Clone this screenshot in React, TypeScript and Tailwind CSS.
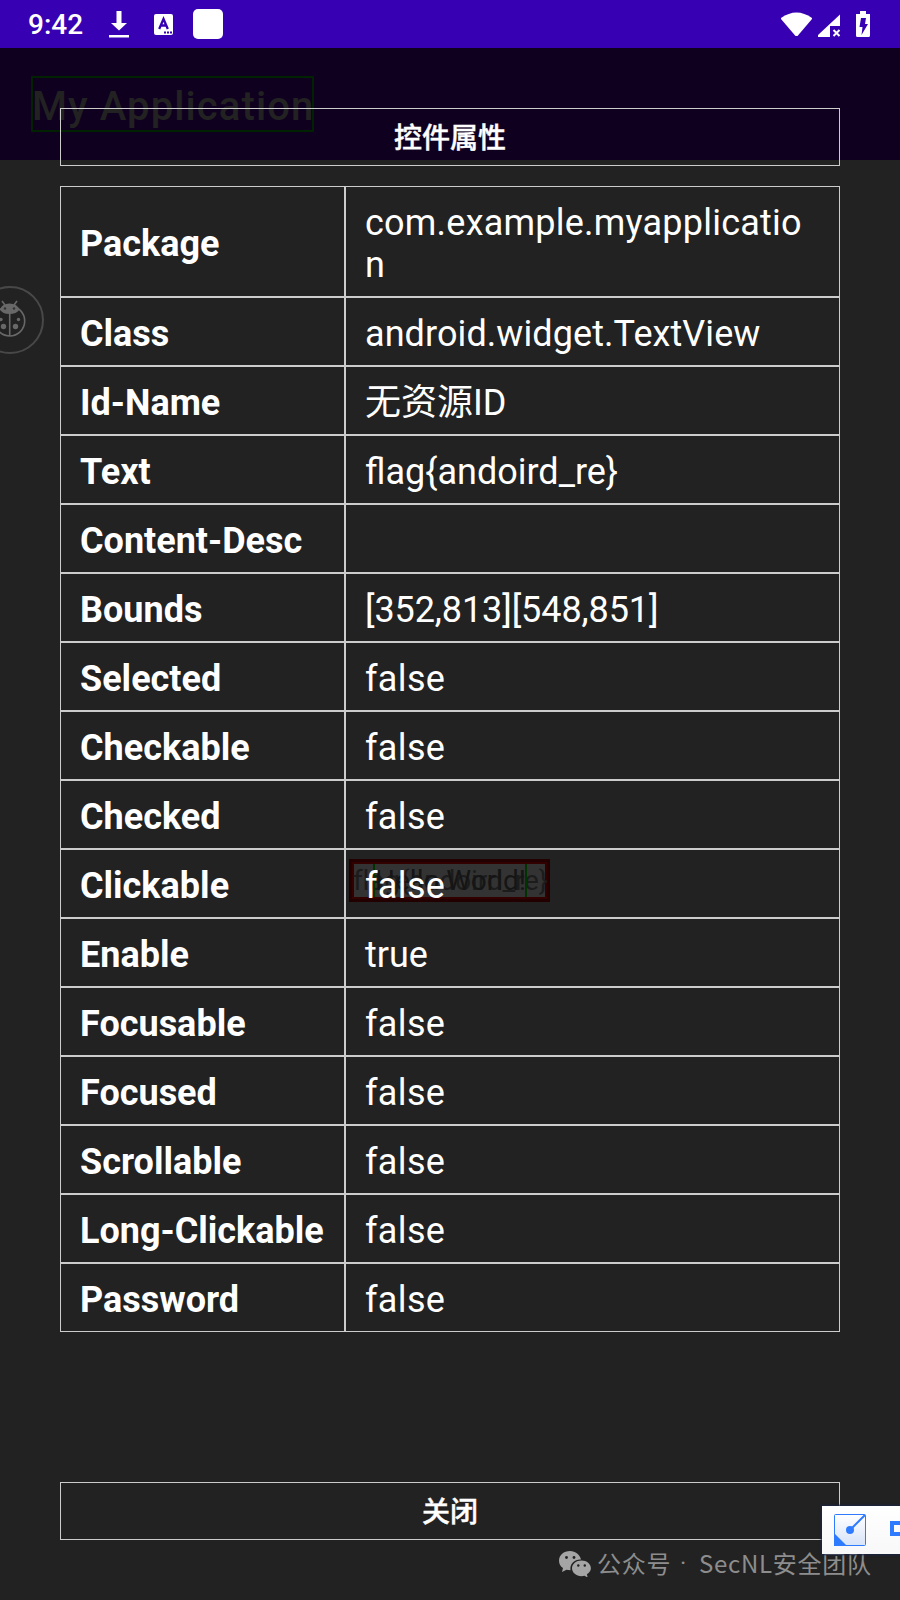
import React from "react";

const rows: [string, string, string][] = [
  ["Package", "com.example.myapplication", "tracking-[0.220px]"],
  ["Class", "android.widget.TextView", "tracking-[0.080px]"],
  ["Id-Name", "无资源ID", "tracking-normal"],
  ["Text", "flag{andoird_re}", "tracking-normal"],
  ["Content-Desc", "", "tracking-normal"],
  ["Bounds", "[352,813][548,851]", "tracking-[-0.100px]"],
  ["Selected", "false", "tracking-[0.350px]"],
  ["Checkable", "false", "tracking-[0.350px]"],
  ["Checked", "false", "tracking-[0.350px]"],
  ["Clickable", "false", "tracking-[0.350px]"],
  ["Enable", "true", "tracking-normal"],
  ["Focusable", "false", "tracking-[0.350px]"],
  ["Focused", "false", "tracking-[0.350px]"],
  ["Scrollable", "false", "tracking-[0.350px]"],
  ["Long-Clickable", "false", "tracking-[0.350px]"],
  ["Password", "false", "tracking-[0.350px]"],
];

function StatusBar() {
  return (
    <header className="flex h-12 items-center bg-[#3700b3] pl-7 text-white">
      <span className="mt-0.5 w-[54px] text-[28px] font-medium leading-8">9:42</span>
      <svg className="ml-[27px] h-[27px] w-5 shrink-0" viewBox="0 0 20 27" fill="currentColor">
        <path d="M7.500 0h5v12H18l-8 7.500-8-7.500h5.500zM0 24h20v2.500H0z" />
      </svg>
      <svg className="ml-[24.500px] h-[21px] w-[19px] shrink-0" viewBox="0 0 19 21">
        <rect width="19" height="21" rx="2" fill="#fff" />
        <path d="M5.200 15 9.500 5l4.300 10M6.800 11.500h5.400" fill="none" stroke="#3700b3" strokeWidth="2.300" />
        <path d="M10 17.500h2v2h-2zM13 17.500h2v2h-2zM16 17.500h2v2h-2z" fill="#3700b3" />
      </svg>
      <span className="ml-5 h-[30px] w-[30px] rounded-[5px] bg-white" />
      <svg className="ml-auto mr-[29px] h-[27px] w-[90px]" viewBox="0 0 90 27" fill="currentColor">
        <path d="M0 7Q15.500-4 31 7v1L16.500 25h-2L0 8z" />
        <path d="M59 3.500V15H49v11H37v-2z" />
        <path d="m52.500 19 6 6m0-6-6 6" stroke="currentColor" strokeWidth="2" />
        <path d="M79 0h6v3h4v21.500q0 1.500-1.500 1.500h-11q-1.500 0-1.500-1.500V3h4z" />
        <path d="M80 7h5l-1 6h3l-6.500 11 1-8h-3z" fill="#3700b3" />
      </svg>
    </header>
  );
}

function HighlightedView() {
  return (
    <div className="absolute left-[349px] top-[859px] h-[43px] w-[201px] border-3 border-[#220000]">
      <div className="relative h-full w-full border-2 border-[#330000] bg-[#333333] text-[28px] leading-[34px]">
        <span className="absolute -left-px top-0 whitespace-nowrap tracking-[-0.150px] text-[#1c1c1c]">flag&#123;andoird_re&#125;</span>
        <div className="absolute left-[19px] top-0 h-[33px] w-[154px] border-x-2 border-[#003300]">
          <span className="whitespace-nowrap text-[#151515]">Hello World!</span>
        </div>
      </div>
    </div>
  );
}

function LadybugButton() {
  return (
    <svg className="absolute left-0 top-[285px] h-[70px] w-[45px]" viewBox="0 0 45 70" fill="none">
      <circle cx="10" cy="35" r="33" stroke="#484848" strokeWidth="2" />
      <g stroke="#686868" strokeWidth="1.600">
        <circle cx="9.700" cy="36" r="15" />
        <path d="M9.700 26v25M5 20l-3-4M14 20l3-4" />
      </g>
      <g fill="#686868">
        <path d="M0 24.500Q2 18.500 9.500 18.500T19.500 24.500q-3 4.500-10 4.500T0 24.500" />
        <circle cx="3.500" cy="41.500" r="2.700" />
        <circle cx="15.500" cy="41.500" r="2.700" />
        <circle cx="1" cy="34.500" r="1.700" />
        <circle cx="18.500" cy="34.500" r="1.700" />
      </g>
      <circle cx="5" cy="23.500" r="1.200" fill="#333" />
      <circle cx="14" cy="23.500" r="1.200" fill="#333" />
    </svg>
  );
}

function FloatingToolbar() {
  return (
    <div className="absolute left-[822px] top-[1506px] flex h-12 w-[78px] items-center overflow-hidden bg-gradient-to-b from-white to-[#f8f8f8] pl-3 shadow-[0_0_2px_1px_#1a2545]">
      <svg className="h-8 w-8 shrink-0" viewBox="0 0 32 32">
        <defs>
          <linearGradient id="tile" x1="0" y1="0" x2="0" y2="1">
            <stop stopColor="#fff" />
            <stop offset="1" stopColor="#d7e3f8" />
          </linearGradient>
        </defs>
        <rect x=".5" y=".5" width="31" height="31" rx="1" fill="url(#tile)" stroke="#2e7bff" />
        <path d="M0 19l13 13H0z" fill="#2e7bff" />
        <path d="M16 16 31 1" stroke="#2e7bff" strokeWidth="2" />
        <circle cx="16" cy="16" r="4" fill="#2e7bff" />
      </svg>
      <span className="-mt-[3px] ml-6 h-[15px] w-5 shrink-0 border-4 border-[#2e7bff]" />
    </div>
  );
}

function Watermark() {
  return (
    <div className="absolute left-[559px] top-[1545px] flex h-9 items-center text-[#8d8d8d]">
      <svg className="mt-0.5 h-[26px] w-8" viewBox="0 0 32 26" fill="#a5a5a5">
        <path d="M11 0C4.800 0 0 4.200 0 9.700c0 3 1.500 5.600 4 7.400L3 21l4.500-2.300 4 .6C10.500 12.500 16 8.200 22 8.600 21 3.600 16.500 0 11 0" />
        <path d="M22.500 9.500c-5.300 0-9.500 3.500-9.500 7.800s4.200 7.900 9.500 7.900q1.600 0 3-.4l3.200 1.700-.8-3.200c2.500-1.500 4-3.600 4-6 0-4.300-4.100-7.800-9.400-7.800" />
        <g fill="#222">
          <circle cx="7.500" cy="6.500" r="1.400" />
          <circle cx="15" cy="6.500" r="1.400" />
          <circle cx="19.300" cy="14.500" r="1.200" />
          <circle cx="25.800" cy="14.500" r="1.200" />
        </g>
      </svg>
      <div className="ml-1.5 flex font-['Noto_Sans_CJK_SC',sans-serif] text-[24px] leading-9 tracking-[0.700px]">
        <span>公众号</span>
        <span className="w-7 pl-[9px] font-[Roboto,sans-serif]">·</span>
        <span className="whitespace-nowrap">SecNL安全团队</span>
      </div>
    </div>
  );
}

export default function App() {
  return (
    <div className="relative h-[1600px] w-[900px] overflow-hidden bg-[#222222] font-[Roboto,'Noto_Sans_CJK_SC',sans-serif]">
      <StatusBar />
      <div className="h-28 bg-[#10001f] pl-[31px] pt-7">
        <div className="h-14 w-[283px] whitespace-nowrap border-2 border-[#002200] text-[40px] font-medium leading-[57px] tracking-[1.100px] text-[#222222]">
          <span className="-ml-px">My Application</span>
        </div>
      </div>
      <HighlightedView />
      <LadybugButton />
      <main className="relative -mt-[52px] flex flex-col px-[60px] text-white">
        <h1 className="h-[58px] border border-[#cccccc] text-center text-[28px] font-medium leading-[59px] [-webkit-text-stroke:0.4px_white]">控件属性</h1>
        <div className="mt-5 flex flex-col text-[36px] leading-[42px]">
          {rows.map(([name, value, tracking]) => (
            <div key={name} className="flex min-h-[69px]">
              <div className="flex w-[285px] items-center whitespace-nowrap border border-[#cccccc] pl-[19px] pt-[5px] font-bold">{name}</div>
              <div className={`w-[495px] break-all border border-[#cccccc] pb-[10px] pl-[19px] pr-[34px] pt-[15px] ${tracking}`}>{value}</div>
            </div>
          ))}
        </div>
        <button className="mt-[150px] h-[58px] border border-[#cccccc] text-center text-[28px] font-medium leading-[56px] [-webkit-text-stroke:0.4px_white]">
          <span className="block pt-0.5">关闭</span>
        </button>
      </main>
      <Watermark />
      <FloatingToolbar />
    </div>
  );
}
